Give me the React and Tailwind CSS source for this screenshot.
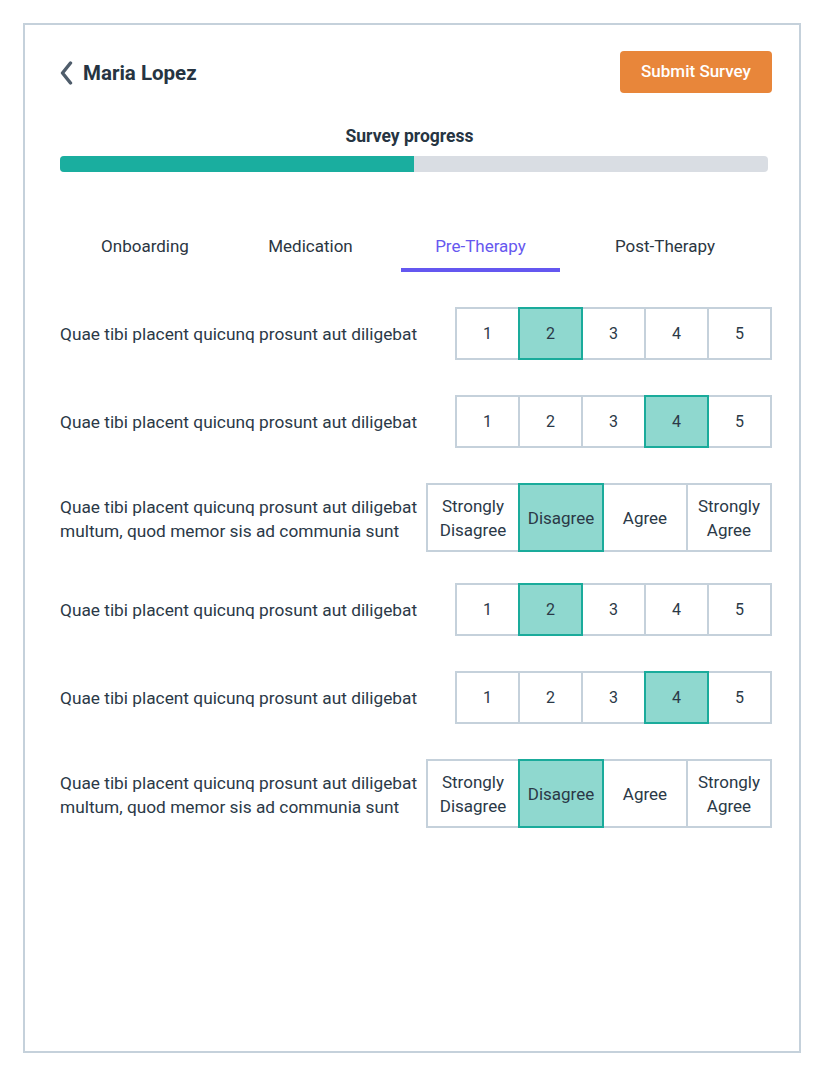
import React from "react";

const questions = [
  { type: "scale", text: ["Quae tibi placent quicunq prosunt aut diligebat"], value: 2 },
  { type: "scale", text: ["Quae tibi placent quicunq prosunt aut diligebat"], value: 4 },
  { type: "agree", text: ["Quae tibi placent quicunq prosunt aut diligebat", "multum, quod memor sis ad communia sunt"], value: 1 },
  { type: "scale", text: ["Quae tibi placent quicunq prosunt aut diligebat"], value: 2 },
  { type: "scale", text: ["Quae tibi placent quicunq prosunt aut diligebat"], value: 4 },
  { type: "agree", text: ["Quae tibi placent quicunq prosunt aut diligebat", "multum, quod memor sis ad communia sunt"], value: 1 },
];

const agreeOptions = [
  { label: ["Strongly", "Disagree"], w: "w-[94px]" },
  { label: ["Disagree"], w: "w-[86px]" },
  { label: ["Agree"], w: "w-[86px]" },
  { label: ["Strongly", "Agree"], w: "w-[86px]" },
];

const tabs = [
  { name: "Onboarding", w: "w-[170px]" },
  { name: "Medication", w: "w-[161px]" },
  { name: "Pre-Therapy", w: "w-[159px] ml-[10px]", active: true },
  { name: "Post-Therapy", w: "w-[210px]" },
];

function Cell({ selected, first, className, children }) {
  return (
    <div
      className={`relative flex items-center justify-center border-2 text-center leading-6 ${
        first ? "" : "-ml-[2px]"
      } ${
        selected
          ? "z-10 border-[#1aab9b] bg-[#8fd8cf]"
          : "border-[#c5d1db] bg-white"
      } ${className}`}
    >
      {children}
    </div>
  );
}

function ScaleRow({ value }) {
  return (
    <div className="flex">
      {[1, 2, 3, 4, 5].map((n, i) => (
        <Cell key={n} first={i === 0} selected={n === value} className="h-[53px] w-[65px] text-[16px]">
          {n}
        </Cell>
      ))}
    </div>
  );
}

function AgreeRow({ value }) {
  return (
    <div className="flex">
      {agreeOptions.map((o, i) => (
        <Cell key={i} first={i === 0} selected={i === value} className={`h-[69px] text-[17px] ${o.w}`}>
          <span>
            {o.label.map((l, j) => (
              <span key={j} className="block">
                {l}
              </span>
            ))}
          </span>
        </Cell>
      ))}
    </div>
  );
}

export default function App() {
  return (
    <div className="min-h-[1076px] w-[824px] bg-white p-[23px] font-['Roboto',sans-serif] text-[#2b3947]">
      <div className="h-[1030px] border-2 border-[#c5d1db] pl-[35px] pr-[27px] pt-[26px]">
        {/* header */}
        <div className="flex items-center justify-between">
          <div className="flex items-center gap-[10px] pt-[2px]">
            <svg width="13" height="24" viewBox="0 0 13 24" fill="none">
              <path
                d="M10.5 2 L2.5 12 L10.5 22"
                stroke="#4f5d6b"
                strokeWidth="3.4"
                strokeLinecap="round"
                strokeLinejoin="round"
              />
            </svg>
            <h1 className="text-[20.5px] font-bold text-[#263442]">Maria Lopez</h1>
          </div>
          <button className="h-[42px] w-[152px] rounded-[4px] bg-[#e8863a] text-[17px] font-medium text-white">
            Submit Survey
          </button>
        </div>

        {/* progress */}
        <div className="mt-[31px] w-[708px]">
          <p className="pr-[9px] text-center text-[17.5px] font-bold leading-6 text-[#263442]">Survey progress</p>
          <div className="mt-[8px] h-4 w-full rounded-[4px] bg-[#d9dde3]">
            <div className="h-4 w-1/2 rounded-l-[4px] bg-[#1aae9f]" />
          </div>
        </div>

        {/* tabs */}
        <div className="mt-[62px] flex">
          {tabs.map((t) => (
            <div
              key={t.name}
              className={`border-b-4 pb-[10px] text-center text-[17px] leading-6 ${t.w} ${
                t.active ? "border-[#6457f0] text-[#6658ef]" : "border-transparent text-[#2b3642]"
              }`}
            >
              {t.name}
            </div>
          ))}
        </div>

        {/* questions */}
        <div className="mt-[35px] flex flex-col">
          {questions.map((q, i) => {
            const prev = questions[i - 1];
            const mt = i === 0 ? "" : prev.type === "agree" ? "mt-[31px]" : "mt-[35px]";
            return (
              <div key={i} className={`flex items-center justify-between ${mt}`}>
                <p className={`whitespace-nowrap text-[17.3px] leading-6 ${q.type === "agree" ? "pt-[2px]" : ""}`}>
                  {q.text.map((l, j) => (
                    <span key={j} className="block">
                      {l}
                    </span>
                  ))}
                </p>
                {q.type === "scale" ? <ScaleRow value={q.value} /> : <AgreeRow value={q.value} />}
              </div>
            );
          })}
        </div>
      </div>
    </div>
  );
}
